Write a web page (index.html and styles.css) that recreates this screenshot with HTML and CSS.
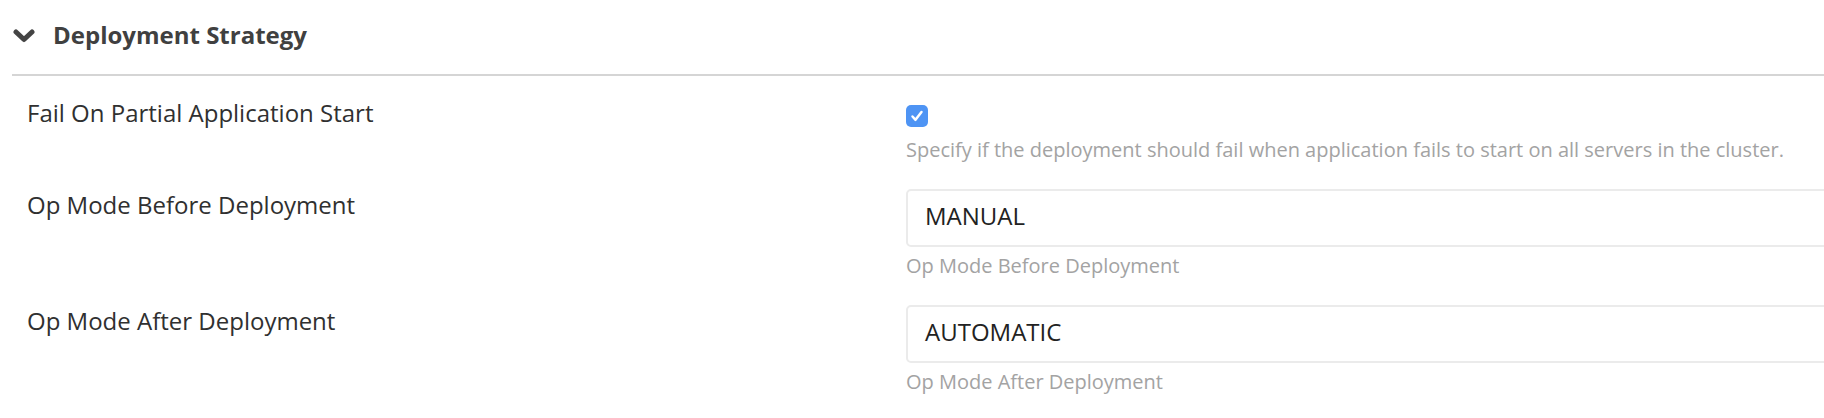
FILE: index.html
```html
<!DOCTYPE html>
<html lang="en">
<head>
<meta charset="utf-8">
<title>Deployment Strategy</title>
<link rel="stylesheet" href="styles.css">
</head>
<body>
<section class="panel">
  <div class="panel-header">
    <svg class="chevron" width="22" height="14" viewBox="0 0 22 14" aria-hidden="true">
      <polyline points="3,3 11,10.5 19,3" fill="none" stroke="#444" stroke-width="5" stroke-linecap="round" stroke-linejoin="round"/>
    </svg>
    <span class="panel-title">Deployment Strategy</span>
  </div>
  <div class="divider"></div>
  <div class="form">
    <div class="row">
      <div class="label">Fail On Partial Application Start</div>
      <div class="control">
        <div class="checkbox">
          <svg width="22" height="22" viewBox="0 0 22 22" aria-hidden="true">
            <polyline points="6.5,11.5 9.5,14.8 15.5,7" fill="none" stroke="#fff" stroke-width="2.5" stroke-linecap="round" stroke-linejoin="round"/>
          </svg>
        </div>
        <div class="help help-check">Specify if the deployment should fail when application fails to start on all servers in the cluster.</div>
      </div>
    </div>
    <div class="row">
      <div class="label">Op Mode Before Deployment</div>
      <div class="control">
        <div class="input">MANUAL</div>
        <div class="help">Op Mode Before Deployment</div>
      </div>
    </div>
    <div class="row">
      <div class="label">Op Mode After Deployment</div>
      <div class="control">
        <div class="input">AUTOMATIC</div>
        <div class="help">Op Mode After Deployment</div>
      </div>
    </div>
  </div>
</section>
</body>
</html>
```
FILE: styles.css
```css
html, body {
  margin: 0;
  padding: 0;
  background: #ffffff;
  overflow: hidden;
}

body {
  font-family: "Open Sans", "Liberation Sans", sans-serif;
  color: #333333;
}

.panel-header {
  display: flex;
  align-items: center;
  gap: 18px;
  padding: 19px 0 0 13px;
  height: 32px;
}

.chevron {
  display: block;
  margin-top: 2px;
}

.panel-title {
  font-size: 24px;
  line-height: 32px;
  font-weight: 700;
  color: #404040;
}

.divider {
  margin: 23px 0 0 12px;
  height: 2px;
  background: #d5d5d5;
}

.form {
  display: flex;
  flex-direction: column;
  gap: 25px;
  padding: 21px 0 0 27px;
}

.row {
  display: grid;
  grid-template-columns: 879px 960px;
}

.label {
  font-size: 24px;
  line-height: 32px;
  color: #303030;
}

.control {
  display: flex;
  flex-direction: column;
}

.checkbox {
  width: 22px;
  height: 22px;
  margin: 8px 0 1px 0;
  border-radius: 5px;
  background: #4e94f4;
}

.checkbox svg {
  display: block;
}

.help {
  font-size: 20px;
  line-height: 28px;
  color: #a3a3a3;
  margin-top: 5px;
}

.help-check {
  margin-top: 8px;
}

.input {
  box-sizing: border-box;
  height: 58px;
  border: 2px solid #ebebeb;
  border-radius: 5px;
  padding: 9px 0 0 17px;
  font-size: 24px;
  line-height: 32px;
  color: #222222;
}
```
